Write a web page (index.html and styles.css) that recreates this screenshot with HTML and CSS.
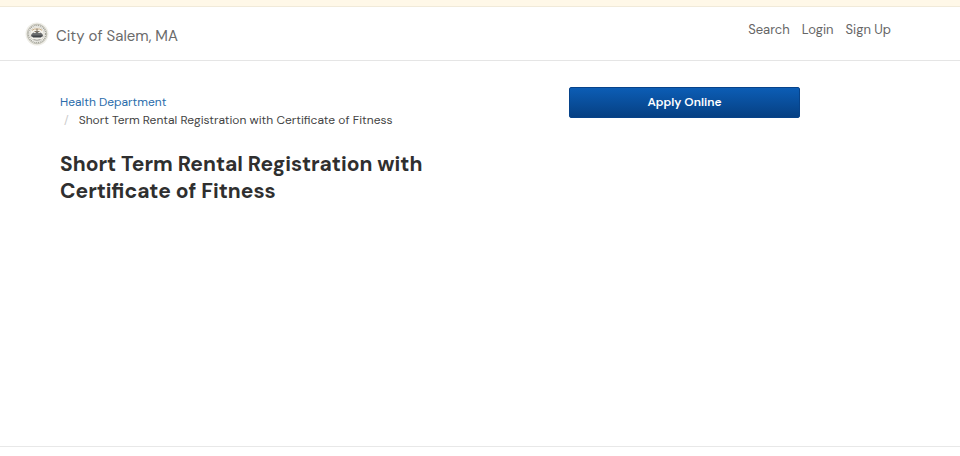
FILE: index.html
```html
<!DOCTYPE html>
<html lang="en">
<head>
<meta charset="utf-8">
<meta name="viewport" content="width=device-width, initial-scale=1">
<title>City of Salem, MA</title>
<link rel="stylesheet" href="styles.css">
</head>
<body>
<div class="notice"></div>
<header class="header">
  <a class="brand" href="#">
    <svg class="seal" viewBox="0 0 24 24" aria-hidden="true">
      <circle cx="12" cy="12" r="11.5" fill="#efeee8"/>
      <circle cx="12" cy="12" r="9.8" fill="#f4f3ee" stroke="#c4c3b8" stroke-width="1"/>
      <circle cx="12" cy="12" r="8.7" fill="none" stroke="#a3a39a" stroke-width="1.3" stroke-dasharray="1.2 .7"/>
      <circle cx="12" cy="12" r="7.2" fill="#f5f3ed" stroke="#c6c4ba" stroke-width=".6"/>
      <path d="M7 8.3q2.5-2 5-1.2 2.5-.8 5 1.2" fill="none" stroke="#c9ad85" stroke-width="1"/>
      <path d="M12 6.5v4M9.5 9.5h5" stroke="#827463" stroke-width="1"/>
      <path d="M6.5 12l2-1.5 1.5.8 2-2 2 2 1.5-.8 2 1.5.7 2.500H5.8z" fill="#6b6d6e"/>
      <path d="M6.5 13.5h11l-1.5 2H8z" fill="#404448"/>
      <path d="M8.5 17.5q3.5 1.5 7 0" fill="none" stroke="#8b8c88" stroke-width=".8"/>
    </svg>
    <span class="name">City of Salem, MA</span>
  </a>
  <nav class="nav" aria-label="Main">
    <a href="#">Search</a>
    <a href="#">Login</a>
    <a href="#">Sign Up</a>
  </nav>
</header>
<main class="main">
  <section class="intro">
    <nav aria-label="Breadcrumb">
      <ol class="crumbs">
        <li><a href="#">Health Department</a></li>
        <li class="current">Short Term Rental Registration with Certificate of Fitness</li>
      </ol>
    </nav>
    <h1>Short Term Rental Registration with Certificate of Fitness</h1>
  </section>
  <aside class="actions">
    <button class="apply" type="button">Apply Online</button>
  </aside>
</main>
<footer class="footer"></footer>
</body>
</html>
```
FILE: styles.css
```css
* {
  box-sizing: border-box;
}

body {
  display: flex;
  flex-direction: column;
  min-height: 100vh;
  margin: 0;
  background: #fff;
  color: #444;
  font-family: "DM Sans", Roboto, "Liberation Sans", sans-serif;
  font-size: 12px;
  line-height: 18px;
}

a {
  color: #2a6cab;
  text-decoration: none;
}

.notice {
  height: 7px;
  background: #fff8e8;
  border-bottom: 1px solid #f1ead9;
}

.header {
  display: flex;
  justify-content: space-between;
  align-items: flex-start;
  padding: 14px 69px 14px 25px;
  border-bottom: 1px solid #e5e5e5;
}

.brand {
  display: flex;
  align-items: center;
  gap: 7px;
  color: #6b6b6b;
  font-size: 15px;
  line-height: 20px;
}

.name {
  padding-top: 5px;
}

.seal {
  width: 24px;
  height: 24px;
}

.nav {
  display: flex;
  gap: 12px;
  font-size: 13px;
}

.nav a {
  color: #666;
}

.main {
  display: grid;
  flex: 1;
  grid-template-columns: minmax(0, 1fr) 231px;
  gap: 109px;
  align-items: start;
  padding: 26px 160px 24px 60px;
}

.crumbs {
  margin: 0;
  padding: 6px 0 0;
  list-style: none;
}

.current::before {
  content: "/";
  padding: 0 10px 0 4px;
  color: #ccc;
}

h1 {
  margin: 22px 0 0;
  color: #2f2f2f;
  font-size: 21px;
  font-weight: 700;
  line-height: 27px;
}

.apply {
  width: 100%;
  padding: 6px 12px;
  border: 1px solid #07438a;
  border-radius: 2px;
  background: linear-gradient(#0c5db5, #064083);
  color: #fff;
  font: inherit;
  font-weight: 600;
  line-height: 17px;
}

.footer {
  height: 10px;
  border-top: 1px solid #e8e8e8;
}
```
